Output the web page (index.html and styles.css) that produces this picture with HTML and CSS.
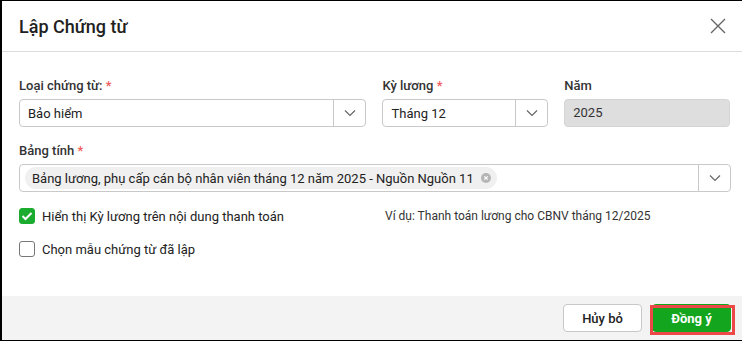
FILE: index.html
```html
<!DOCTYPE html>
<html lang="vi">
<head>
    <meta charset="UTF-8">
    <title>Lập Chứng từ</title>
    <link rel="stylesheet" href="styles.css">
</head>
<body>
    <div class="dialog">
        <div class="dlg-head">
            <h1 class="dlg-title">Lập Chứng từ</h1>
            <span class="dlg-close">
                <svg width="16" height="16" viewBox="0 0 16 16"><path d="M1 1L15 15M15 1L1 15" stroke="#666" stroke-width="1.4" fill="none"/></svg>
            </span>
        </div>
        <div class="dlg-body">
            <div class="row">
                <div class="field f-type">
                    <label class="lbl">Loại chứng từ: <span class="req">*</span></label>
                    <div class="select">
                        <span class="val">Bảo hiểm</span>
                        <span class="arrow"><svg width="12" height="8" viewBox="0 0 12 8"><path d="M1 1.5L6 6.5L11 1.5" stroke="#666" stroke-width="1.2" fill="none"/></svg></span>
                    </div>
                </div>
                <div class="field f-period">
                    <label class="lbl">Kỳ lương <span class="req">*</span></label>
                    <div class="select">
                        <span class="val">Tháng 12</span>
                        <span class="arrow"><svg width="12" height="8" viewBox="0 0 12 8"><path d="M1 1.5L6 6.5L11 1.5" stroke="#666" stroke-width="1.2" fill="none"/></svg></span>
                    </div>
                </div>
                <div class="field f-year">
                    <label class="lbl">Năm</label>
                    <div class="input disabled">2025</div>
                </div>
            </div>
            <div class="field">
                <label class="lbl">Bảng tính <span class="req">*</span></label>
                <div class="select multi">
                    <span class="val">
                        <span class="tag">Bảng lương, phụ cấp cán bộ nhân viên tháng 12 năm 2025 - Nguồn Nguồn 11
                            <span class="tag-x"><svg width="10" height="10" viewBox="0 0 10 10"><circle cx="5" cy="5" r="5" fill="#b5b5b5"/><path d="M3.3 3.3L6.7 6.7M6.7 3.3L3.3 6.7" stroke="#fff" stroke-width="1.2"/></svg></span>
                        </span>
                    </span>
                    <span class="arrow"><svg width="12" height="8" viewBox="0 0 12 8"><path d="M1 1.5L6 6.5L11 1.5" stroke="#666" stroke-width="1.2" fill="none"/></svg></span>
                </div>
            </div>
            <div class="row check-row">
                <label class="check">
                    <span class="box on"><svg width="12" height="10" viewBox="0 0 12 10"><path d="M1.5 5L4.5 8L10.5 2" stroke="#fff" stroke-width="2" fill="none"/></svg></span>
                    Hiển thị Kỳ lương trên nội dung thanh toán
                </label>
                <span class="hint">Ví dụ: Thanh toán lương cho CBNV tháng 12/2025</span>
            </div>
            <label class="check">
                <span class="box"></span>
                Chọn mẫu chứng từ đã lập
            </label>
        </div>
        <div class="dlg-foot">
            <button class="btn">Hủy bỏ</button>
            <span class="mark">
                <button class="btn primary">Đồng ý</button>
            </span>
        </div>
    </div>
</body>
</html>
```

FILE: styles.css
```css
*{
    margin: 0;
    padding: 0;
    box-sizing: border-box;
}
body{
    width: 742px;
    height: 341px;
    background: #fff;
    font-family: Roboto, "Noto Sans", sans-serif;
    color: #212121;
    overflow: hidden;
}
.dialog{
    width: 742px;
    height: 341px;
    border-top: 1px solid #000;
    border-left: 2px solid #000;
    border-bottom: 1px solid #000;
    display: flex;
    flex-direction: column;
    background: #fff;
}
.dlg-head{
    height: 51px;
    border-bottom: 1px solid #dcdcdc;
    display: flex;
    align-items: center;
    justify-content: space-between;
    padding: 0 15px 0 17px;
}
.dlg-title{
    font-size: 18px;
    font-weight: 500;
    color: #212121;
}
.dlg-close{
    display: flex;
    width: 18px;
    height: 18px;
    align-items: center;
    justify-content: center;
}
.dlg-body{
    flex: 1;
    padding: 25px 12px 0 17px;
}
.row{
    display: flex;
}
.field{
    display: flex;
    flex-direction: column;
}
.f-type{
    width: 348px;
    margin-right: 16px;
}
.f-period{
    width: 166px;
    margin-right: 16px;
}
.f-year{
    width: 166px;
}
.lbl{
    font-size: 13px;
    font-weight: 500;
    color: #333;
    height: 20px;
    line-height: 18px;
    margin-bottom: 2px;
}
.req{
    color: #f05a5a;
}
.select{
    height: 28px;
    border: 1px solid #c9c9c9;
    border-radius: 4px;
    display: flex;
    align-items: stretch;
    background: #fff;
    margin-bottom: 15px;
}
.select .val{
    flex: 1;
    display: flex;
    align-items: center;
    padding-left: 8px;
    font-size: 13px;
    color: #222;
}
.select .arrow{
    width: 32px;
    border-left: 1px solid #c9c9c9;
    display: flex;
    align-items: center;
    justify-content: center;
}
.input{
    height: 28px;
    border: 1px solid #d4d4d4;
    border-radius: 4px;
    font-size: 13px;
    line-height: 26px;
    padding-left: 8px;
    color: #333;
}
.input.disabled{
    background: #dedede;
}
.multi{
    width: 712px;
    margin-bottom: 15px;
}
.multi .val{
    padding-left: 5px;
}
.tag{
    height: 22px;
    background: #f0f0f0;
    border-radius: 11px;
    padding: 0 6px 0 7px;
    display: flex;
    align-items: center;
    gap: 7px;
    font-size: 13px;
    color: #222;
}
.tag-x{
    display: flex;
}
.check-row{
    align-items: center;
    margin-bottom: 15px;
}
.check{
    display: flex;
    align-items: center;
    gap: 7px;
    font-size: 13px;
    color: #222;
    height: 18px;
}
.check-row .check{
    width: 366px;
}
.box{
    width: 16px;
    height: 16px;
    border: 1px solid #777;
    border-radius: 3px;
    display: flex;
    align-items: center;
    justify-content: center;
}
.box.on{
    background: #1aab2f;
    border-color: #1aab2f;
}
.hint{
    font-size: 12px;
    color: #333;
}
.dlg-foot{
    height: 44px;
    background: #f3f3f3;
    display: flex;
    align-items: center;
    justify-content: flex-end;
    gap: 10px;
    padding: 0 11px 0 0;
}
.btn{
    height: 28px;
    border: 1px solid #c8c8c8;
    border-radius: 4px;
    background: #fff;
    font-family: Roboto, "Noto Sans", sans-serif;
    font-size: 13px;
    font-weight: 500;
    color: #222;
    width: 79px;
    cursor: pointer;
}
.mark{
    position: relative;
    display: flex;
}
.mark::after{
    content: "";
    position: absolute;
    left: -2px;
    top: 1px;
    right: -4px;
    bottom: -3px;
    border: 3px solid #ec4848;
}
.btn.primary{
    width: 79px;
    background: #12a51d;
    border-color: #12a51d;
    color: #fff;
    font-weight: 700;
}
```
